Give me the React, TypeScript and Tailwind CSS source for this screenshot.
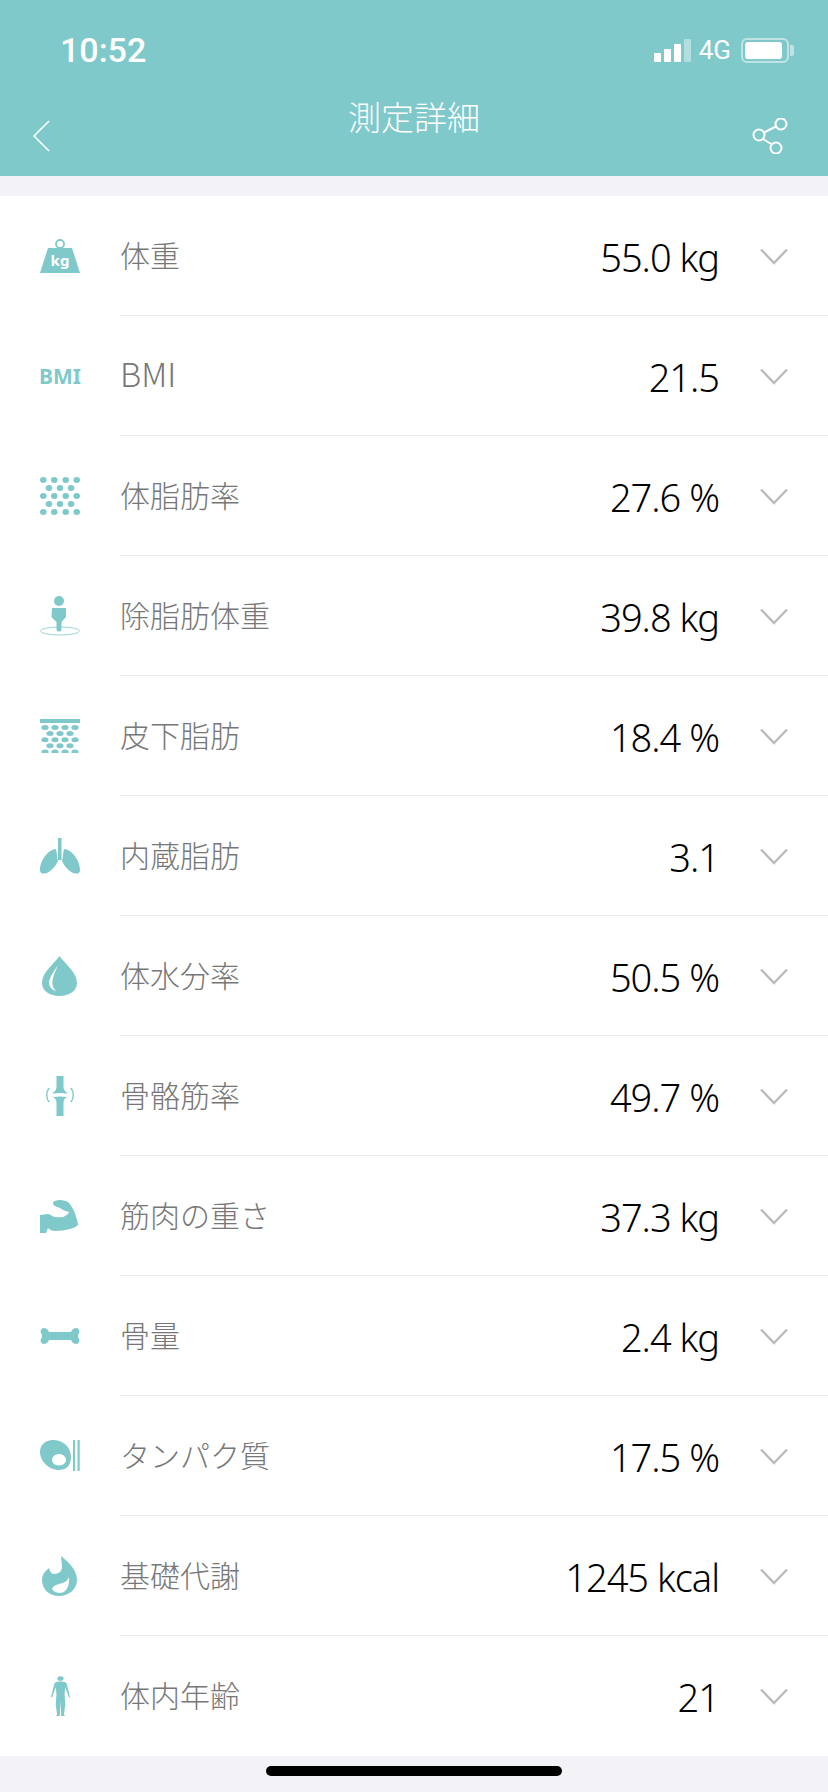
const TEAL = "#80c9ca";

function WeightIcon() {
  return (
    <svg width="40" height="34" viewBox="0 0 40 34" aria-hidden>
      <circle cx="20" cy="5" r="4" fill="none" stroke={TEAL} strokeWidth="1.8" />
      <path d="M8 9h24l8 25H0z" fill={TEAL} />
      <text x="20" y="27" textAnchor="middle" fontSize="15" fontWeight="700" fill="#fff" fontFamily="Noto Sans, sans-serif">kg</text>
    </svg>
  );
}

function BmiIcon() {
  return <span className="font-['Noto_Sans',sans-serif] text-[21px] font-bold leading-none text-[#80c9ca]">BMI</span>;
}

function DotsIcon() {
  const rows = [0, 1, 2, 3, 4];
  return (
    <svg width="40" height="38" viewBox="0 0 40 38" aria-hidden>
      {rows.map((r) =>
        (r % 2 === 0 ? [3.3, 14.3, 25.7, 36.7] : [9, 20, 31]).map((x) => (
          <ellipse key={`${r}-${x}`} cx={x} cy={3 + r * 8} rx="3.3" ry="2.9" fill={TEAL} />
        )),
      )}
    </svg>
  );
}

function LeanIcon() {
  return (
    <svg width="40" height="40" viewBox="0 0 40 40" aria-hidden>
      <circle cx="19" cy="5" r="5" fill={TEAL} />
      <path d="M12 12h14v9l-4.500 5v7a2.500 2.500 0 0 1-5 0v-7l-5-5z" fill={TEAL} />
      <ellipse cx="20" cy="35" rx="19.500" ry="4" fill="none" stroke={TEAL} strokeWidth="0.8" />
    </svg>
  );
}

function SkinIcon() {
  const rows = [0, 1, 2, 3, 4];
  return (
    <svg width="40" height="34" viewBox="0 0 40 34" aria-hidden>
      <rect width="40" height="4" fill={TEAL} />
      {rows.map((r) =>
        (r % 2 === 0 ? [5, 15, 25, 35] : [10, 20, 30]).map((x) => (
          <ellipse key={`${r}-${x}`} cx={x} cy={8.500 + r * 6.100} rx="3.600" ry="2.500" fill={TEAL} />
        )),
      )}
    </svg>
  );
}

function LungsIcon() {
  return (
    <svg width="40" height="36" viewBox="0 0 40 36" aria-hidden>
      <rect x="18" y="0" width="3.500" height="22" fill={TEAL} />
      <path d="M16 11c-7 0-16 11-16 21 0 3 2 4 5 3.500 5-1 10-6 13-12.500-1-4-1-8-2-12z" fill={TEAL} />
      <path d="M24 11c7 0 16 11 16 21 0 3-2 4-5 3.500-5-1-10-6-13-12.500 1-4 1-8 2-12z" fill={TEAL} />
    </svg>
  );
}

function DropIcon() {
  return (
    <svg width="36" height="40" viewBox="0 0 36 40" aria-hidden>
      <path d="M17.500 0C12 8 0 16 0 27c0 8 8 13 17.500 13S35 35 35 27C35 16 23 8 17.500 0z" fill={TEAL} />
      <path d="M16 9c-3 5-8 11-9 17-.5 4 3 8 7 9-3-3-4-6-3.500-10 .5-5 3.500-11 5.500-16z" fill="#fff" />
    </svg>
  );
}

function JointIcon() {
  return (
    <svg width="28" height="40" viewBox="0 0 28 40" aria-hidden>
      <path d="M10.500 0h7v11c0 3 2 5 4.500 6-3 1-6 0-8 0s-5 1-8 0c2.500-1 4.500-3 4.500-6z" fill={TEAL} />
      <path d="M6 20.500c3 1 6 0 8 0s5 1 8 0c-2.500 1-4.500 3-4.500 6V40h-7V26.500c0-3-2-5-4.500-6z" fill={TEAL} />
      <path d="M3 12c-3 4-3 10 0 14M25 12c3 4 3 10 0 14" fill="none" stroke={TEAL} strokeWidth="1.400" />
    </svg>
  );
}

function MuscleIcon() {
  return (
    <svg width="40" height="33" viewBox="0 0 40 33" aria-hidden>
      <path d="M0 15l8-1c3 0 4 3 7 3 4 0 8 1 10-1 2-1 4-3 4-4-3-1-7-2-9-4-3-1-7-2-7-5 0-2 4-3 7-3 3 0 6 1 8 2 4 4 7 10 8 15 1 3 2 5 2 8-2 2-5 3-8 4-5 1-10 2-15 2-3 0-5-1-7-3l-2 5H0z" fill={TEAL} />
    </svg>
  );
}

function BoneIcon() {
  return (
    <svg width="40" height="16" viewBox="0 0 40 16" aria-hidden>
      <path d="M9 4h22c1-2.500 3-4 5-4 3 0 4 3 3 5-.5 1-1 2-1 3s.5 2 1 3c1 2 0 5-3 5-2 0-4-1.500-5-4H9c-1 2.500-3 4-5 4-3 0-4-3-3-5 .5-1 1-2 1-3s-.5-2-1-3C0 3 1 0 4 0c2 0 4 1.500 5 4z" fill={TEAL} />
    </svg>
  );
}

function ProteinIcon() {
  return (
    <svg width="40" height="32" viewBox="0 0 40 32" aria-hidden>
      <path fillRule="evenodd" d="M13 0c10 0 18 7 18 17 0 9-5 13-12 13C9 30 0 21 0 12 0 5 5 0 13 0zM19 14a7 5.800 0 1 0 .01 0z" fill={TEAL} />
      <rect x="33" y="0" width="2.200" height="31" fill={TEAL} />
      <rect x="37.500" y="0" width="2.200" height="31" fill={TEAL} />
    </svg>
  );
}

function FlameIcon() {
  return (
    <svg width="36" height="40" viewBox="0 0 36 40" aria-hidden>
      <path d="M19 0c7 6 16 13 16 24 0 9-8 16-18 16C7 40 0 33 0 24c0-5 3-9 7-12 1 3 2 6 5 6 5 0 8-3 8-7 0-4-1-8-1-11z" fill={TEAL} />
      <path d="M27 21c-2 5-6 6-10 7-3 1-6 2-7 5 2 3 5 4 8 4 6 0 10-7 9-16z" fill="#fff" />
    </svg>
  );
}

function BodyIcon() {
  return (
    <svg width="19" height="40" viewBox="0 0 14 40" preserveAspectRatio="none" aria-hidden>
      <circle cx="7" cy="2.500" r="2.300" fill={TEAL} />
      <path d="M7 5.500c2 0 4 .5 4.500 2L14 21l-.8.500L10.500 11l-.5 7 .5 11-1 9.500 1 1.500H7.500L7 25l-.5 15H3.500l1-1.500-1-9.500.5-11-.5-7L.8 21.500 0 21 2.500 7.500c.5-1.500 2.500-2 4.500-2z" fill={TEAL} />
    </svg>
  );
}

const rows = [
  { icon: <WeightIcon />, label: "体重", value: "55.0 kg" },
  { icon: <BmiIcon />, label: "BMI", value: "21.5" },
  { icon: <DotsIcon />, label: "体脂肪率", value: "27.6 %" },
  { icon: <LeanIcon />, label: "除脂肪体重", value: "39.8 kg" },
  { icon: <SkinIcon />, label: "皮下脂肪", value: "18.4 %" },
  { icon: <LungsIcon />, label: "内蔵脂肪", value: "3.1" },
  { icon: <DropIcon />, label: "体水分率", value: "50.5 %" },
  { icon: <JointIcon />, label: "骨骼筋率", value: "49.7 %" },
  { icon: <MuscleIcon />, label: "筋肉の重さ", value: "37.3 kg" },
  { icon: <BoneIcon />, label: "骨量", value: "2.4 kg" },
  { icon: <ProteinIcon />, label: "タンパク質", value: "17.5 %" },
  { icon: <FlameIcon />, label: "基礎代謝", value: "1245 kcal" },
  { icon: <BodyIcon />, label: "体内年齢", value: "21" },
];

export default function App() {
  return (
    <div className="flex h-[1792px] w-[828px] flex-col overflow-hidden bg-[#f2f2f7] font-['Noto_Sans','Noto_Sans_CJK_JP',sans-serif]">
      <header className="h-[176px] shrink-0 bg-[#80c9ca] text-white">
        <div className="flex h-[100px] items-start justify-between pl-[60px] pr-[34px] pt-[30px]">
          <span className="font-['Roboto',sans-serif] text-[34px] font-medium leading-[40px]">10:52</span>
          <div className="flex items-center pt-[7px]">
            <div className="flex items-end gap-[3px]">
              <div className="h-[9px] w-[7px] rounded-[1px] bg-white" />
              <div className="h-[13px] w-[7px] rounded-[1px] bg-white" />
              <div className="h-[18px] w-[7px] rounded-[1px] bg-white" />
              <div className="h-[23px] w-[7px] rounded-[1px] bg-white/40" />
            </div>
            <span className="ml-[8px] font-['Roboto',sans-serif] text-[26px] leading-[26px]">4G</span>
            <div className="ml-[10px] flex h-[25px] w-[48px] items-center rounded-[6px] border-2 border-white/50 p-[2px]">
              <div className="h-[17px] w-[37px] rounded-[3px] bg-white" />
            </div>
            <div className="ml-[1px] h-[11px] w-[4px] rounded-r-[2px] bg-white/50" />
          </div>
        </div>
        <div className="grid grid-cols-[1fr_auto_1fr] items-start px-[40px]">
          <svg className="ml-[-9px] mt-[19px]" width="20" height="34" viewBox="0 0 20 34" fill="none" aria-hidden>
            <path d="M18 2L3 17l15 15" stroke="#fff" strokeWidth="1.600" />
          </svg>
          <h1 className="mt-[-3px] font-['Noto_Sans_CJK_JP',sans-serif] text-[33px] font-light leading-[38px]">測定詳細</h1>
          <svg className="mt-[18px] justify-self-end" width="36" height="36" viewBox="0 0 36 36" fill="none" aria-hidden stroke="#fff" strokeWidth="2">
            <circle cx="7" cy="17" r="5.500" />
            <circle cx="29" cy="6" r="5.500" />
            <circle cx="24" cy="30" r="5.500" />
            <path d="M12 14.500L24 8.500M11 21l9 5.500" />
          </svg>
        </div>
      </header>
      <div className="h-[20px] shrink-0" />
      <ul className="bg-white">
        {rows.map((row, i) => (
          <li key={row.label} className="flex h-[120px] items-stretch">
            <div className="flex w-[120px] shrink-0 items-center justify-center">{row.icon}</div>
            <div className={`flex min-w-0 flex-1 items-center pr-[40px] ${i < rows.length - 1 ? "border-b border-[#ececec]" : ""}`}>
              <span className={`mt-[-4px] font-['Noto_Sans_CJK_JP',sans-serif] font-light leading-none text-[#777777] ${row.label === "BMI" ? "text-[33px]" : "text-[30px]"}`}>{row.label}</span>
              <span className="ml-auto mt-[2px] whitespace-nowrap font-['Noto_Sans',sans-serif] text-[38px] font-light leading-none tracking-[-1px] text-black">{row.value}</span>
              <svg className="ml-[41px] mt-[2px]" width="28" height="18" viewBox="0 0 28 18" fill="none" aria-hidden>
                <path d="M1 1.500L14 15 27 1.500" stroke="#bbbbbb" strokeWidth="2.400" />
              </svg>
            </div>
          </li>
        ))}
      </ul>
      <div className="flex-1 pt-[10px]">
        <div className="mx-auto h-[10px] w-[296px] rounded-full bg-black" />
      </div>
    </div>
  );
}
